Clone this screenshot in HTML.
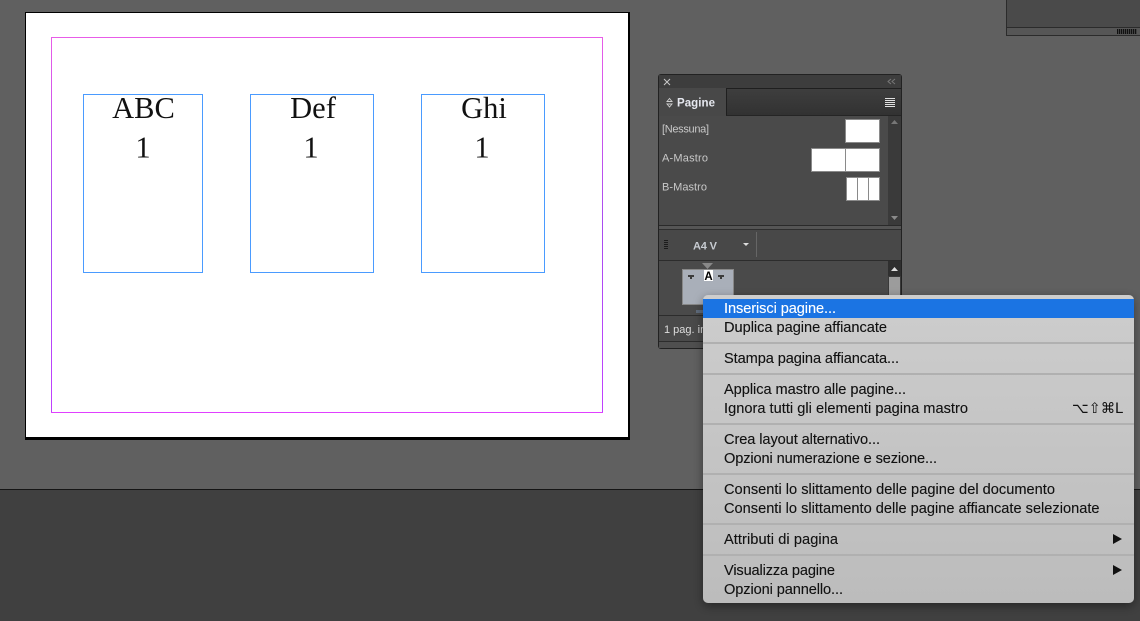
<!DOCTYPE html>
<html><head><meta charset="utf-8"><style>
html,body{margin:0;padding:0;width:1140px;height:621px;overflow:hidden;background:#606060}
svg{display:block}
.m{font:14.600px "Liberation Sans",sans-serif;fill:#111;stroke:#111;stroke-width:.12}
.p{font:11px "Liberation Sans",sans-serif;fill:#c8c8c8}
.s{font:30.500px "Liberation Serif",serif;fill:#111;text-anchor:middle}
</style></head><body>
<svg width="1140" height="621" viewBox="0 0 1140 621" xmlns="http://www.w3.org/2000/svg">
<defs>
<linearGradient id="mg" x1="0" y1="0" x2="0" y2="1"><stop offset="0" stop-color="#cdcdcd"/><stop offset="1" stop-color="#bcbcbc"/></linearGradient>
<linearGradient id="tg" x1="0" y1="0" x2="0" y2="1"><stop offset="0" stop-color="#3e3e3e"/><stop offset="1" stop-color="#323232"/></linearGradient>
<linearGradient id="mag" x1="0" y1="0" x2="0" y2="1"><stop offset="0" stop-color="#e85ce8"/><stop offset=".5" stop-color="#a84cf0"/><stop offset="1" stop-color="#c040ff"/></linearGradient>
<filter id="sh" x="-10%" y="-10%" width="120%" height="120%"><feDropShadow dx="0" dy="3" stdDeviation="5" flood-color="#000" flood-opacity=".4"/></filter>
</defs>
<rect width="1140" height="489" fill="#606060"/>
<rect y="489" width="1140" height="1" fill="#151515"/>
<rect y="490" width="1140" height="131" fill="#404040"/>

<!-- top right panel -->
<rect x="1006" y="0" width="134" height="36" fill="#2b2b2b"/>
<rect x="1007" y="0" width="133" height="27" fill="#4a4a4a"/>
<rect x="1007" y="28" width="133" height="7" fill="#565656"/>
<g fill="#111"><rect x="1117" y="29" width="1.300" height="5"/><rect x="1119" y="29" width="1.300" height="5"/><rect x="1121" y="29" width="1.300" height="5"/><rect x="1123" y="29" width="1.300" height="5"/><rect x="1125" y="29" width="1.300" height="5"/><rect x="1127" y="29" width="1.300" height="5"/><rect x="1129" y="29" width="1.300" height="5"/><rect x="1131" y="29" width="1.300" height="5"/><rect x="1133" y="29" width="1.300" height="5"/><rect x="1135" y="29" width="1.300" height="5"/></g>

<!-- document page -->
<rect x="25" y="12" width="605" height="428" fill="#000"/>
<rect x="26" y="13" width="602" height="424" fill="#fff"/>
<rect x="51.500" y="37.500" width="551" height="375" fill="none" stroke="url(#mag)" stroke-width="1"/>
<rect x="51" y="37" width="552" height="1" fill="#e85ce8"/>
<rect x="51" y="412" width="552" height="1" fill="#e040ff"/>
<g fill="none" stroke="#4a9bff" stroke-width="1">
<rect x="83.500" y="94.500" width="119" height="178"/>
<rect x="250.500" y="94.500" width="123" height="178"/>
<rect x="421.500" y="94.500" width="123" height="178"/>
</g>
<text class="s" x="143.500" y="118">ABC</text><text class="s" x="143" y="157.500">1</text>
<text class="s" x="313" y="118">Def</text><text class="s" x="311" y="157.500">1</text>
<text class="s" x="484" y="118">Ghi</text><text class="s" x="482" y="157.500">1</text>

<!-- pages panel -->
<rect x="658" y="74" width="244" height="275" rx="3" fill="#222"/>
<rect x="659" y="75" width="242" height="13" fill="#3d3d3d"/>
<rect x="659" y="88" width="242" height="1" fill="#1f1f1f"/>
<path d="M664 79l6 6M670 79l-6 6" stroke="#c8c8c8" stroke-width="1" fill="none"/>
<path d="M891 79l-3 2.500 3 2.500M895 79l-3 2.500 3 2.500" stroke="#777" stroke-width="1" fill="none"/>
<rect x="659" y="89" width="242" height="26" fill="url(#tg)"/>
<rect x="659" y="88" width="67" height="28" fill="#484848"/>
<rect x="726" y="88" width="1" height="27" fill="#1f1f1f"/>
<rect x="727" y="115" width="174" height="1" fill="#252525"/>
<path d="M669.500 98.500l-2.500 3h5zM669.500 107l-2.500-3h5z" fill="none" stroke="#d0d0d0" stroke-width=".9"/>
<text x="677" y="106.500" textLength="38" style="font:bold 11.500px 'Liberation Sans',sans-serif;fill:#e6e8ef">Pagine</text>
<g fill="#e0e0e0"><rect x="885" y="98" width="10" height="1"/><rect x="885" y="100" width="10" height="1"/><rect x="885" y="102" width="10" height="1"/><rect x="885" y="104" width="10" height="1"/><rect x="885" y="106" width="10" height="1"/></g>
<rect x="659" y="116" width="229" height="109" fill="#4a4a4a"/>
<rect x="888" y="116" width="13" height="109" fill="#3a3a3a"/>
<path d="M891 124l3.500-4 3.500 4z" fill="#777"/>
<path d="M891 216l3.500 4 3.500-4z" fill="#8a8a8a"/>
<text class="p" x="662" y="132.500" textLength="47">[Nessuna]</text>
<text class="p" x="662" y="161.500" textLength="46">A-Mastro</text>
<text class="p" x="662" y="190.500" textLength="45">B-Mastro</text>
<g fill="#fff" stroke="#8a8a8a" stroke-width="1">
<rect x="845.500" y="119.500" width="34" height="23"/>
<rect x="811.500" y="148.500" width="34" height="23"/><rect x="845.500" y="148.500" width="34" height="23"/>
<rect x="846.500" y="177.500" width="11" height="23"/><rect x="857.500" y="177.500" width="11" height="23"/><rect x="868.500" y="177.500" width="11" height="23"/>
</g>
<rect x="659" y="225" width="242" height="1" fill="#2a2a2a"/>
<rect x="659" y="226" width="242" height="3" fill="#555"/>
<rect x="659" y="229" width="242" height="1" fill="#2e2e2e"/>
<rect x="659" y="230" width="242" height="30" fill="#484848"/>
<g fill="#1c1c1c"><rect x="664" y="240" width="4" height="1"/><rect x="664" y="242" width="4" height="1"/><rect x="664" y="244" width="4" height="1"/><rect x="664" y="246" width="4" height="1"/><rect x="664" y="248" width="4" height="1"/></g>
<text x="693" y="249.500" textLength="24" style="font:bold 11px 'Liberation Sans',sans-serif;fill:#c8ccd2">A4 V</text>
<path d="M743 243h6l-3 3z" fill="#ddd"/>
<rect x="756" y="232" width="1" height="25" fill="#666"/>
<rect x="659" y="260" width="242" height="1" fill="#2c2c2c"/>
<rect x="659" y="261" width="229" height="54" fill="#4a4a4a"/>
<rect x="888" y="261" width="13" height="54" fill="#3a3a3a"/>
<rect x="888" y="261" width="13" height="15" fill="#2f2f2f"/>
<path d="M891 271l3.500-4 3.500 4z" fill="#e0e0e0"/>
<rect x="889" y="277" width="11" height="18" fill="#9c9c9c"/>
<path d="M702 263h11l-5.500 6z" fill="#888"/>
<rect x="682.500" y="269.500" width="51" height="35" fill="#a9afb9" stroke="#888"/>
<rect x="704" y="270" width="9" height="11" fill="#fff"/>
<text x="708.500" y="280" text-anchor="middle" style="font:bold 11.500px 'Liberation Sans',sans-serif;fill:#000">A</text>
<g fill="#3c3c3c"><rect x="688" y="275" width="6" height="2"/><rect x="690" y="277" width="2" height="2"/><rect x="718" y="275" width="6" height="2"/><rect x="720" y="277" width="2" height="2"/></g>
<rect x="696" y="310" width="7" height="3" fill="#5f6b7c"/>
<rect x="659" y="315" width="242" height="1" fill="#2c2c2c"/>
<rect x="659" y="316" width="242" height="25" fill="#4a4a4a"/>
<text class="p" x="664" y="333" style="fill:#ddd">1 pag. in</text>
<rect x="659" y="341" width="242" height="1" fill="#2c2c2c"/>
<rect x="659" y="342" width="242" height="6" fill="#4f4f4f"/>

<!-- context menu -->
<rect x="703" y="295" width="431" height="308" rx="5" fill="url(#mg)" filter="url(#sh)"/>
<rect x="703" y="299" width="431" height="19" fill="#1b74e3"/>
<g fill="#b0b0b0"><rect x="703" y="342" width="431" height="2"/><rect x="703" y="373" width="431" height="2"/><rect x="703" y="423" width="431" height="2"/><rect x="703" y="473" width="431" height="2"/><rect x="703" y="523" width="431" height="2"/><rect x="703" y="554" width="431" height="2"/></g>
<text class="m" x="724" y="313" textLength="112" style="fill:#fff;stroke:#fff">Inserisci pagine...</text>
<text class="m" x="724" y="332" textLength="163">Duplica pagine affiancate</text>
<text class="m" x="724" y="363" textLength="175">Stampa pagina affiancata...</text>
<text class="m" x="724" y="394" textLength="182">Applica mastro alle pagine...</text>
<text class="m" x="724" y="413" textLength="244">Ignora tutti gli elementi pagina mastro</text>
<text x="1072" y="413" textLength="51" style="font:14.500px 'DejaVu Sans',sans-serif;fill:#111">⌥⇧⌘L</text>
<text class="m" x="724" y="444" textLength="156">Crea layout alternativo...</text>
<text class="m" x="724" y="463" textLength="213">Opzioni numerazione e sezione...</text>
<text class="m" x="724" y="494" textLength="331">Consenti lo slittamento delle pagine del documento</text>
<text class="m" x="724" y="513" textLength="375.500">Consenti lo slittamento delle pagine affiancate selezionate</text>
<text class="m" x="724" y="544" textLength="114">Attributi di pagina</text>
<text class="m" x="724" y="575" textLength="111">Visualizza pagine</text>
<text class="m" x="724" y="594" textLength="119">Opzioni pannello...</text>
<path d="M1113 534v10l9-5zM1113 565v10l9-5z" fill="#111"/>
</svg>
</body></html>
